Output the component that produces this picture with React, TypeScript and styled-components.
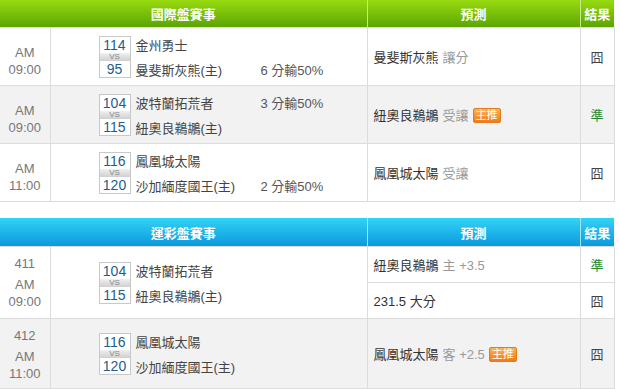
import React from 'react';
import styled, { createGlobalStyle } from 'styled-components';

const GlobalStyle = createGlobalStyle`
  body {
    margin: 0;
    background: #fff;
    font-family: "Liberation Sans", "Noto Sans CJK TC", sans-serif;
  }
`;

const Page = styled.div`
  width: 620px;
`;

const Board = styled.table`
  width: 614px;
  border-collapse: collapse;
  table-layout: fixed;
  margin-bottom: 16px;
  font-size: 13px;
  color: #333;
`;

const HeadCell = styled.th<{ $tone: 'green' | 'blue' }>`
  height: ${p => (p.$tone === 'green' ? 27 : 28)}px;
  padding: 0;
  color: #fff;
  font-size: 13px;
  font-weight: bold;
  text-align: center;
  background: ${p =>
    p.$tone === 'green'
      ? 'linear-gradient(#98da10, #5ba502)'
      : 'linear-gradient(#33d3f3, #0a99df)'};
  border-left: 1px solid ${p => (p.$tone === 'green' ? '#c4ea88' : '#9fe4f8')};
  &:first-child {
    border-left: none;
  }
`;

const Row = styled.tr<{ $shade?: boolean; $h: number }>`
  height: ${p => p.$h}px;
  background: ${p => (p.$shade ? '#f2f2f2' : '#fff')};
`;

const Cell = styled.td`
  padding: 0;
  border: 1px solid #dcdcdc;
  vertical-align: middle;
  &:first-child {
    border-left: none;
  }
`;

const TimeCell = styled(Cell)<{ $drop?: number }>`
  text-align: center;
  color: #777;
  font-size: 13px;
  line-height: 17px;
  padding-top: ${p => p.$drop ?? 0}px;
`;

const GameNo = styled.div`
  margin-bottom: 4px;
`;

const MatchCell = styled(Cell)`
  padding-left: 48px;
`;

const Matchup = styled.div`
  display: grid;
  grid-template-columns: 32px 120px auto;
  grid-template-rows: 17px 8px 17px;
  column-gap: 5px;
  align-items: center;
`;

const Score = styled.div<{ $pos: 'top' | 'bottom' }>`
  height: 100%;
  box-sizing: border-box;
  border: 1px solid #c8c8c8;
  ${p => (p.$pos === 'top' ? 'border-bottom: none;' : 'border-top: none;')}
  background: #fff;
  color: #1f5d8a;
  font-size: 14px;
  line-height: 17px;
  text-align: center;
`;

const Vs = styled.div`
  height: 100%;
  box-sizing: border-box;
  border-left: 1px solid #c8c8c8;
  border-right: 1px solid #c8c8c8;
  background: linear-gradient(#f0f0f0, #cfcfcf);
  color: #888;
  font-size: 8px;
  line-height: 8px;
  text-align: center;
`;

const Team = styled.div`
  color: #444;
  white-space: nowrap;
`;

const Spread = styled.div`
  color: #555;
  white-space: nowrap;
`;

const PickCell = styled(Cell)`
  padding-left: 6px;
`;

const PickTeam = styled.span`
  color: #333;
`;

const PickNote = styled.span`
  color: #999;
  margin-left: 4px;
`;

const Badge = styled.span`
  display: inline-block;
  margin-left: 4px;
  padding: 0 2px;
  height: 13px;
  line-height: 13px;
  font-size: 11px;
  color: #fff;
  border: 1px solid #e47a1c;
  border-radius: 2px;
  background: linear-gradient(#fbb356, #ee7b18);
  vertical-align: 1px;
`;

const ResultCell = styled(Cell)<{ $hit?: boolean }>`
  text-align: center;
  color: ${p => (p.$hit ? '#2a8a2a' : '#444')};
`;

type Game = {
  no?: string;
  time: string;
  away: string;
  home: string;
  awayScore: number;
  homeScore: number;
  spread?: string;
  spreadOn?: 'away' | 'home';
};

const MatchBlock: React.FC<{ g: Game }> = ({ g }) => (
  <Matchup>
    <Score $pos="top">{g.awayScore}</Score>
    <Team>{g.away}</Team>
    <Spread>{g.spreadOn === 'away' ? g.spread : ''}</Spread>
    <Vs>VS</Vs>
    <div />
    <div />
    <Score $pos="bottom">{g.homeScore}</Score>
    <Team>{g.home}</Team>
    <Spread>{g.spreadOn === 'home' ? g.spread : ''}</Spread>
  </Matchup>
);

const TimeBlock: React.FC<{ g: Game }> = ({ g }) => (
  <>
    {g.no && <GameNo>{g.no}</GameNo>}
    <div>AM</div>
    <div>{g.time}</div>
  </>
);

const intl: (Game & { pick: string; note: string; star?: boolean; hit?: boolean })[] = [
  { time: '09:00', away: '金州勇士', home: '曼斐斯灰熊(主)', awayScore: 114, homeScore: 95, spread: '6 分輸50%', spreadOn: 'home', pick: '曼斐斯灰熊', note: '讓分' },
  { time: '09:00', away: '波特蘭拓荒者', home: '紐奧良鵜鶘(主)', awayScore: 104, homeScore: 115, spread: '3 分輸50%', spreadOn: 'away', pick: '紐奧良鵜鶘', note: '受讓', star: true, hit: true },
  { time: '11:00', away: '鳳凰城太陽', home: '沙加緬度國王(主)', awayScore: 116, homeScore: 120, spread: '2 分輸50%', spreadOn: 'home', pick: '鳳凰城太陽', note: '受讓' },
];

const lottoA: Game = { no: '411', time: '09:00', away: '波特蘭拓荒者', home: '紐奧良鵜鶘(主)', awayScore: 104, homeScore: 115 };
const lottoB: Game = { no: '412', time: '11:00', away: '鳳凰城太陽', home: '沙加緬度國王(主)', awayScore: 116, homeScore: 120 };

const Cols = () => (
  <colgroup>
    <col style={{ width: 50 }} />
    <col style={{ width: 317 }} />
    <col style={{ width: 213 }} />
    <col style={{ width: 34 }} />
  </colgroup>
);

export default function App() {
  return (
    <Page>
      <GlobalStyle />
      <Board>
        <Cols />
        <thead>
          <tr>
            <HeadCell $tone="green" colSpan={2}>國際盤賽事</HeadCell>
            <HeadCell $tone="green">預測</HeadCell>
            <HeadCell $tone="green">結果</HeadCell>
          </tr>
        </thead>
        <tbody>
          {intl.map((g, i) => (
            <Row key={i} $shade={i === 1} $h={58}>
              <TimeCell $drop={8}><TimeBlock g={g} /></TimeCell>
              <MatchCell><MatchBlock g={g} /></MatchCell>
              <PickCell>
                <PickTeam>{g.pick}</PickTeam>
                <PickNote>{g.note}</PickNote>
                {g.star && <Badge>主推</Badge>}
              </PickCell>
              <ResultCell $hit={g.hit}>{g.hit ? '準' : '囧'}</ResultCell>
            </Row>
          ))}
        </tbody>
      </Board>

      <Board>
        <Cols />
        <thead>
          <tr>
            <HeadCell $tone="blue" colSpan={2}>運彩盤賽事</HeadCell>
            <HeadCell $tone="blue">預測</HeadCell>
            <HeadCell $tone="blue">結果</HeadCell>
          </tr>
        </thead>
        <tbody>
          <Row $h={36}>
            <TimeCell rowSpan={2}><TimeBlock g={lottoA} /></TimeCell>
            <MatchCell rowSpan={2}><MatchBlock g={lottoA} /></MatchCell>
            <PickCell>
              <PickTeam>紐奧良鵜鶘</PickTeam>
              <PickNote>主 +3.5</PickNote>
            </PickCell>
            <ResultCell $hit>準</ResultCell>
          </Row>
          <Row $h={36}>
            <PickCell>
              <PickTeam>231.5 大分</PickTeam>
            </PickCell>
            <ResultCell>囧</ResultCell>
          </Row>
          <Row $shade $h={70}>
            <TimeCell $drop={2}><TimeBlock g={lottoB} /></TimeCell>
            <MatchCell><MatchBlock g={lottoB} /></MatchCell>
            <PickCell>
              <PickTeam>鳳凰城太陽</PickTeam>
              <PickNote>客 +2.5</PickNote>
              <Badge>主推</Badge>
            </PickCell>
            <ResultCell>囧</ResultCell>
          </Row>
        </tbody>
      </Board>
    </Page>
  );
}
